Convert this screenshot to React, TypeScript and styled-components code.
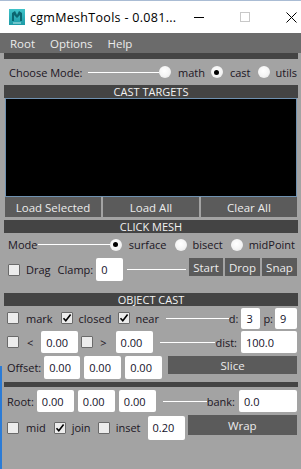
import React from "react";
import styled, { createGlobalStyle } from "styled-components";

const GlobalStyle = createGlobalStyle`
  html, body {
    margin: 0;
    padding: 0;
    background: #a3a3a3;
  }
  body {
    font-family: "Open Sans", "Liberation Sans", sans-serif;
  }
`;

const Window = styled.div`
  width: 301px;
  height: 469px;
  display: flex;
  flex-direction: column;
  overflow: hidden;
  background: #a3a3a3;
`;

const TitleBar = styled.div`
  height: 32px;
  flex: none;
  display: flex;
  align-items: center;
  background: #ffffff;
  border-top: 1px solid #aabcd4;
  padding-left: 9px;
`;

const IconWrap = styled.span`
  width: 16px;
  height: 16px;
  flex: none;
  display: flex;
`;

const Title = styled.span`
  margin-left: 5px;
  flex: none;
  font-size: 12.5px;
  letter-spacing: 0.3px;
  color: #000;
  white-space: nowrap;
`;

const Controls = styled.div`
  margin-left: auto;
  flex: none;
  display: flex;
  height: 100%;
`;

const Ctrl = styled.div`
  width: 46px;
  height: 100%;
  display: flex;
  align-items: center;
  justify-content: center;
`;

const MenuBar = styled.div`
  height: 20px;
  flex: none;
  display: flex;
  align-items: center;
  gap: 15px;
  padding-left: 10px;
  background: #6b6b6b;
  font-size: 11.5px;
  color: #ececec;
`;

const Content = styled.div`
  flex: 1;
  display: flex;
  flex-direction: column;
  padding: 0 3px 0 2px;
  border-left: 2px solid #888;
  border-image: linear-gradient(to bottom, #a3a3a3 0, #a3a3a3 312px, #2b7bd6 312px) 1;
`;

const Band = styled.div<{ $h: number; $mt?: number }>`
  height: ${(p) => p.$h}px;
  margin-top: ${(p) => p.$mt ?? 0}px;
  flex: none;
  background: #444444;
`;

const Header = styled.div<{ $mt?: number }>`
  height: 13px;
  margin-top: ${(p) => p.$mt ?? 0}px;
  flex: none;
  background: #444444;
  color: #f2f2f2;
  font-size: 11px;
  line-height: 13px;
  text-align: center;
`;

const Row = styled.div<{ $h: number; $mt?: number; $pl?: number }>`
  height: ${(p) => p.$h}px;
  margin-top: ${(p) => p.$mt ?? 0}px;
  padding: 0 1px 0 ${(p) => p.$pl ?? 3}px;
  flex: none;
  display: flex;
  align-items: center;
  font-size: 11px;
  color: #1c1624;
  white-space: nowrap;
`;

const Label = styled.span<{ $ml?: number }>`
  margin-left: ${(p) => p.$ml ?? 0}px;
`;

const Line = styled.div<{ $ml?: number; $mr?: number }>`
  flex: 1;
  height: 1px;
  background: #ffffff;
  margin: 0 ${(p) => p.$mr ?? 0}px 0 ${(p) => p.$ml ?? 0}px;
`;

const Radio = styled.span<{ $on?: boolean; $ml?: number }>`
  width: 12px;
  height: 12px;
  flex: none;
  margin-left: ${(p) => p.$ml ?? 0}px;
  border-radius: 50%;
  background: radial-gradient(circle at 45% 40%, #ffffff 0, #f4f4f4 55%, #dcdcdc 100%);
  display: flex;
  align-items: center;
  justify-content: center;
  &::after {
    content: "";
    display: ${(p) => (p.$on ? "block" : "none")};
    width: 5px;
    height: 5px;
    border-radius: 50%;
    background: #000;
  }
`;

const Box = styled.span<{ $ml?: number }>`
  width: 12px;
  height: 12px;
  flex: none;
  box-sizing: border-box;
  margin-left: ${(p) => p.$ml ?? 0}px;
  background: #ececec;
  border: 1px solid #6a6a6a;
  border-radius: 1px;
  display: flex;
  align-items: center;
  justify-content: center;
`;

const Field = styled.div<{ $w: number; $h?: number; $ml?: number }>`
  width: ${(p) => p.$w}px;
  height: ${(p) => p.$h ?? 22}px;
  flex: none;
  margin-left: ${(p) => p.$ml ?? 0}px;
  box-sizing: border-box;
  padding-left: 5px;
  background: #ffffff;
  border-radius: 2px;
  display: flex;
  align-items: center;
  color: #14122a;
`;

const Btn = styled.div<{ $w?: number; $h?: number; $ml?: number; $top?: boolean }>`
  ${(p) => (p.$w ? `width: ${p.$w}px; flex: none;` : "flex: 1;")}
  height: ${(p) => p.$h ?? 19}px;
  margin-left: ${(p) => p.$ml ?? 0}px;
  align-self: ${(p) => (p.$top ? "flex-start" : "auto")};
  background: #5b5b5b;
  color: #ececec;
  font-size: 11.5px;
  display: flex;
  align-items: center;
  justify-content: center;
`;

const BtnGroup = styled.div`
  align-self: flex-start;
  display: flex;
  gap: 2px;
  margin-left: 3px;
`;

const ListBox = styled.div`
  height: 99px;
  margin: 0 1px;
  flex: none;
  box-sizing: border-box;
  background: #000;
  border: 1px solid #6f91b0;
`;

const BtnRow = styled.div`
  height: 20px;
  margin: 0 1px;
  flex: none;
  display: flex;
  gap: 2px;
`;

const Check = ({ on, ml }: { on?: boolean; ml?: number }) => (
  <Box $ml={ml}>
    {on && (
      <svg width="10" height="10" viewBox="0 0 10 10">
        <path d="M1.5 5.2 L3.8 7.8 L8.6 1.6" fill="none" stroke="#000" strokeWidth="1.6" />
      </svg>
    )}
  </Box>
);

const AppIcon = () => (
  <IconWrap>
    <svg width="16" height="16" viewBox="0 0 16 16">
      <defs>
        <linearGradient id="ig" x1="0" y1="0" x2="0" y2="1">
          <stop offset="0" stopColor="#3fc3c9" />
          <stop offset="1" stopColor="#1d9aa6" />
        </linearGradient>
      </defs>
      <rect x="0" y="0" width="16" height="16" fill="url(#ig)" />
      <path d="M3 12 L3 4 L6 2 L8 6 L10 2 L13 4 L13 12 L11 12 L11 6 L8 9 L5 6 L5 12 Z" fill="#0b6670" />
      <rect x="4" y="13.5" width="8" height="1" fill="#bfe9ec" />
    </svg>
  </IconWrap>
);

export default function App() {
  return (
    <>
      <GlobalStyle />
      <Window>
        <TitleBar>
          <AppIcon />
          <Title>cgmMeshTools - 0.081...</Title>
          <Controls>
            <Ctrl>
              <svg width="10" height="10" viewBox="0 0 10 10">
                <rect x="0" y="5" width="10" height="1" fill="#000" />
              </svg>
            </Ctrl>
            <Ctrl>
              <svg width="10" height="10" viewBox="0 0 10 10">
                <rect x="0.5" y="0.5" width="9" height="9" fill="none" stroke="#c8c8c8" />
              </svg>
            </Ctrl>
            <Ctrl>
              <svg width="11" height="11" viewBox="0 0 11 11">
                <path d="M0.5 0.5 L10.5 10.5 M10.5 0.5 L0.5 10.5" stroke="#000" strokeWidth="1" />
              </svg>
            </Ctrl>
          </Controls>
        </TitleBar>

        <MenuBar>
          <span>Root</span>
          <span>Options</span>
          <span>Help</span>
        </MenuBar>

        <Content>
          <Band $h={6} />
          <Row $h={26} $pl={5}>
            <Label>Choose Mode:</Label>
            <Line $ml={5} />
            <Radio />
            <Label $ml={7}>math</Label>
            <Radio $on $ml={6} />
            <Label $ml={7}>cast</Label>
            <Radio $ml={7} />
            <Label $ml={6}>utils</Label>
          </Row>

          <Header>CAST TARGETS</Header>
          <ListBox />
          <BtnRow>
            <Btn $h={20}>Load Selected</Btn>
            <Btn $h={20}>Load All</Btn>
            <Btn $h={20}>Clear All</Btn>
          </BtnRow>

          <Header $mt={3}>CLICK MESH</Header>
          <Row $h={23} $pl={4}>
            <Label>Mode</Label>
            <Line $ml={1} />
            <Radio $on />
            <Label $ml={7}>surface</Label>
            <Radio $ml={8} />
            <Label $ml={6}>bisect</Label>
            <Radio $ml={8} />
            <Label $ml={6}>midPoint</Label>
            <Label $ml={2} />
          </Row>
          <Row $h={23} $mt={2} $pl={4}>
            <Check />
            <Label $ml={6}>Drag</Label>
            <Label $ml={7}>Clamp:</Label>
            <Field $w={27} $h={23} $ml={3}>0</Field>
            <Line $ml={4} />
            <BtnGroup>
              <Btn $w={34} $h={18}>Start</Btn>
              <Btn $w={35} $h={18}>Drop</Btn>
              <Btn $w={35} $h={18}>Snap</Btn>
            </BtnGroup>
          </Row>

          <Header $mt={12}>OBJECT CAST</Header>
          <Row $h={22} $mt={1}>
            <Check />
            <Label $ml={7}>mark</Label>
            <Check on ml={8} />
            <Label $ml={6}>closed</Label>
            <Check on ml={7} />
            <Label $ml={5}>near</Label>
            <Line $ml={7} />
            <Label>d:</Label>
            <Field $w={19} $h={21} $ml={3}>3</Field>
            <Label $ml={3}>p:</Label>
            <Field $w={22} $h={21} $ml={2}>9</Field>
          </Row>
          <Row $h={22} $mt={2}>
            <Check />
            <Label $ml={8}>&lt;</Label>
            <Field $w={37} $ml={8}>0.00</Field>
            <Check ml={3} />
            <Label $ml={7}>&gt;</Label>
            <Field $w={37} $ml={9}>0.00</Field>
            <Line $ml={7} />
            <Label>dist:</Label>
            <Field $w={56} $ml={4}>100.0</Field>
          </Row>
          <Row $h={23} $mt={3}>
            <Label>Offset:</Label>
            <Field $w={36} $h={23} $ml={3}>0.00</Field>
            <Field $w={37} $h={23} $ml={4}>0.00</Field>
            <Field $w={37} $h={23} $ml={4}>0.00</Field>
            <Btn $h={18} $ml={6} $top>Slice</Btn>
          </Row>

          <Band $h={5} $mt={3} />
          <Row $h={22} $mt={3}>
            <Label>Root:</Label>
            <Field $w={37} $ml={3}>0.00</Field>
            <Field $w={37} $ml={4}>0.00</Field>
            <Field $w={37} $ml={4}>0.00</Field>
            <Line $ml={7} />
            <Label>bank:</Label>
            <Field $w={58} $ml={4}>0.0</Field>
          </Row>
          <Row $h={25} $mt={3}>
            <Check />
            <Label $ml={7}>mid</Label>
            <Check on ml={8} />
            <Label $ml={6}>join</Label>
            <Check ml={7} />
            <Label $ml={6}>inset</Label>
            <Field $w={37} $h={24} $ml={7}>0.20</Field>
            <Btn $h={20} $ml={3} $top>Wrap</Btn>
          </Row>
        </Content>
      </Window>
    </>
  );
}
